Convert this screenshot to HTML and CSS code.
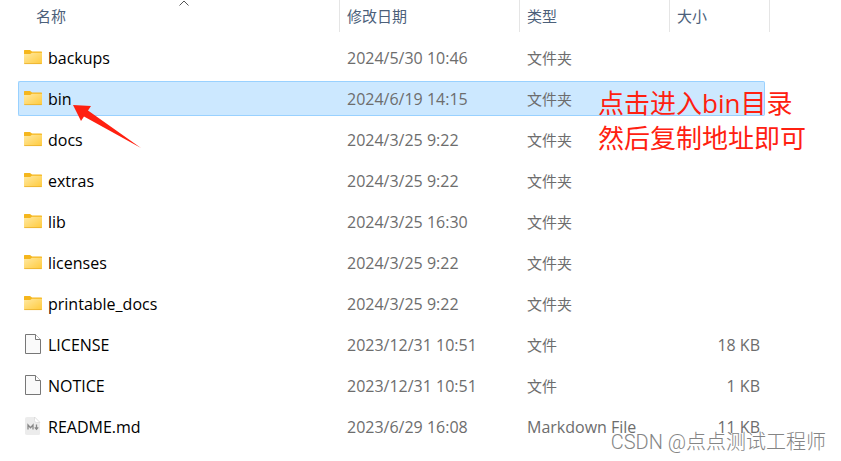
FILE: index.html
```html
<!DOCTYPE html>
<html lang="zh-CN">
  <head>
    <meta charset="UTF-8" />
    <meta name="viewport" content="width=device-width, initial-scale=1.0" />
    <title>bin</title>
    <link rel="stylesheet" href="styles.css">
  </head>
  <body>
    <svg class="defs" width="0" height="0" aria-hidden="true">
      <defs>
        <linearGradient id="folderFill" x1="0" y1="0" x2="1" y2="1">
          <stop offset="0" stop-color="#ffe9a3" />
          <stop offset="1" stop-color="#ffca3b" />
        </linearGradient>
        <symbol id="folder" viewBox="0 0 20 20">
          <path d="M1 4.5V3.6Q1 3 1.6 3H7l2 1.6h9.4q.6 0 .6.6V8H1z" fill="#f5b61c" />
          <path d="M1 7h6.2l1.7-1.3H19v10.6q0 .7-.6.7H1.6q-.6 0-.6-.7z" fill="url(#folderFill)" />
          <path d="M1.3 16.6h17.4" stroke="#e9ad28" stroke-width="0.8" />
        </symbol>
        <symbol id="file" viewBox="0 0 20 20">
          <path d="M2.5.5h10l5 5v14h-15z" fill="#fafafa" stroke="#777" />
          <path d="M12.5.5v5h5" fill="#fff" stroke="#777" />
        </symbol>
        <symbol id="markdown" viewBox="0 0 20 20">
          <path d="M4 1h8l5 5v11.5q0 1.5-1.5 1.5h-11Q2 19 2 17.500V2.500Q2 1 4 1z" fill="#ececec" />
          <path d="M11.500 1v3.500q0 2 2 2H17z" fill="#fff" stroke="#d4d4d4" stroke-width="0.6" />
          <path d="M5 13.500V9l2.500 2.800L10 9v4.500M13.500 8.500v4.500M11.800 11.300l1.700 2 1.700-2" fill="none" stroke="#888" stroke-width="1.300" />
        </symbol>
      </defs>
    </svg>

    <table class="files">
      <colgroup>
        <col />
        <col class="col-date" />
        <col class="col-type" />
        <col class="col-size" />
        <col class="col-end" />
      </colgroup>
      <thead>
        <tr>
          <th class="name-head">
            <button type="button">名称</button>
            <svg class="sort" viewBox="0 0 10 6" aria-hidden="true"><path d="M.5 5.500l4.500-4.500 4.500 4.500" /></svg>
          </th>
          <th><button type="button">修改日期</button></th>
          <th><button type="button">类型</button></th>
          <th colspan="2"><button type="button">大小</button></th>
        </tr>
      </thead>
      <tbody>
        <tr>
          <td class="name"><svg class="icon"><use href="#folder" /></svg>backups</td>
          <td>2024/5/30 10:46</td>
          <td class="type">文件夹</td>
          <td class="size"></td>
          <td></td>
        </tr>
        <tr class="selected">
          <td class="name">
            <svg class="icon"><use href="#folder" /></svg>bin
            <svg class="arrow" viewBox="0 0 70 44" aria-hidden="true"><path d="M0 0l18 1-3 4.500L68 43 11 11.500 8 16z" /></svg>
          </td>
          <td>2024/6/19 14:15</td>
          <td class="type">
            文件夹
            <p class="note">点击进入bin目录<br />然后复制地址即可</p>
          </td>
          <td class="size"></td>
          <td></td>
        </tr>
        <tr>
          <td class="name"><svg class="icon"><use href="#folder" /></svg>docs</td>
          <td>2024/3/25 9:22</td>
          <td class="type">文件夹</td>
          <td class="size"></td>
          <td></td>
        </tr>
        <tr>
          <td class="name"><svg class="icon"><use href="#folder" /></svg>extras</td>
          <td>2024/3/25 9:22</td>
          <td class="type">文件夹</td>
          <td class="size"></td>
          <td></td>
        </tr>
        <tr>
          <td class="name"><svg class="icon"><use href="#folder" /></svg>lib</td>
          <td>2024/3/25 16:30</td>
          <td class="type">文件夹</td>
          <td class="size"></td>
          <td></td>
        </tr>
        <tr>
          <td class="name"><svg class="icon"><use href="#folder" /></svg>licenses</td>
          <td>2024/3/25 9:22</td>
          <td class="type">文件夹</td>
          <td class="size"></td>
          <td></td>
        </tr>
        <tr>
          <td class="name"><svg class="icon"><use href="#folder" /></svg>printable_docs</td>
          <td>2024/3/25 9:22</td>
          <td class="type">文件夹</td>
          <td class="size"></td>
          <td></td>
        </tr>
        <tr>
          <td class="name"><svg class="icon"><use href="#file" /></svg>LICENSE</td>
          <td>2023/12/31 10:51</td>
          <td class="type">文件</td>
          <td class="size">18 KB</td>
          <td></td>
        </tr>
        <tr>
          <td class="name"><svg class="icon"><use href="#file" /></svg>NOTICE</td>
          <td>2023/12/31 10:51</td>
          <td class="type">文件</td>
          <td class="size">1 KB</td>
          <td></td>
        </tr>
        <tr>
          <td class="name"><svg class="icon"><use href="#markdown" /></svg>README.md</td>
          <td>2023/6/29 16:08</td>
          <td class="type type-latin">Markdown File</td>
          <td class="size">11 KB</td>
          <td></td>
        </tr>
      </tbody>
    </table>

    <div class="watermark">CSDN @点点测试工程师</div>
  </body>
</html>
```
FILE: styles.css
```css
body {
  position: relative;
  box-sizing: border-box;
  min-height: 100vh;
  margin: 0;
  padding: 0 71px 0 18px;
  background-color: #fff;
  color: #000;
  font-family: "Open Sans", "Noto Sans CJK SC", sans-serif;
  font-size: 15px;
  line-height: 20px;
}
.defs {
  position: absolute;
}

/* file list */
.files {
  width: 100%;
  margin-top: -6px;
  table-layout: fixed;
  border-collapse: separate;
  border-spacing: 0 6px;
}
.col-date {
  width: 180px;
}
.col-type {
  width: 150px;
}
.col-size {
  width: 95px;
}
.col-end {
  width: 5px;
}
th {
  box-sizing: border-box;
  height: 34px;
  padding: 0 0 2px 7px;
  text-align: left;
  background: linear-gradient(#e5e5e5, #e5e5e5) right top / 1px 32px no-repeat;
}
th button {
  padding: 0;
  border: none;
  background: none;
  color: #4c607a;
  font: inherit;
  font-weight: 400;
}
.name-head {
  position: relative;
  padding-left: 18px;
}
.sort {
  position: absolute;
  top: 0;
  left: 50%;
  width: 10px;
  height: 6px;
}
.sort path {
  fill: none;
  stroke: #555;
}
td {
  box-sizing: border-box;
  height: 35px;
  padding: 0 0 0 7px;
  color: #6d6d6d;
  font-size: 16px;
  white-space: nowrap;
  border: 1px solid transparent;
  border-width: 1px 0;
}
.name {
  position: relative;
  padding-left: 5px;
  color: #000;
}
.type {
  position: relative;
  font-size: 15px;
}
.type-latin {
  font-size: 16px;
}
.size {
  padding-right: 5px;
  text-align: right;
}
.icon {
  width: 20px;
  height: 20px;
  margin-right: 5px;
  vertical-align: -3px;
}
.selected td:not(:last-child) {
  background-color: #cce8ff;
  border-color: #99d1ff;
}
.selected .name {
  padding-left: 4px;
  border-left-width: 1px;
  border-radius: 2px 0 0 2px;
}
.selected .size {
  border-right-width: 1px;
  border-radius: 0 2px 2px 0;
}

/* marks drawn over the list */
.arrow {
  position: absolute;
  top: 23px;
  left: 54px;
  width: 70px;
  height: 44px;
}
.arrow path {
  fill: #ff2010;
}
.note {
  position: absolute;
  z-index: 1;
  top: 4px;
  left: 78px;
  margin: 0;
  color: #ff2010;
  font-size: 26px;
  line-height: 35px;
}
.watermark {
  position: absolute;
  right: 15px;
  bottom: 4px;
  color: #858585;
  font-family: Roboto, "Noto Sans CJK SC", sans-serif;
  font-size: 20px;
  font-weight: 300;
  line-height: 30px;
}
```
